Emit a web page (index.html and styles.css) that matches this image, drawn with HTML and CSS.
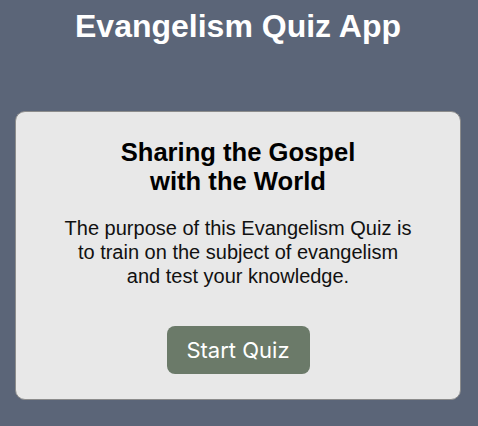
FILE: index.html
```html
<!DOCTYPE html>
<html lang="en">
<head>
<meta charset="utf-8">
<title>Evangelism Quiz App</title>
<link rel="stylesheet" href="styles.css">
</head>
<body>
<header class="app-header">
  <h1 class="app-title">Evangelism Quiz App</h1>
</header>
<main class="card">
  <h2 class="card-title">Sharing the Gospel<br>with the World</h2>
  <p class="card-text">The purpose of this Evangelism Quiz is to train on the subject of evangelism and test your knowledge.</p>
  <button class="start-btn" type="button">Start Quiz</button>
</main>
</body>
</html>
```
FILE: styles.css
```css
html, body {
  margin: 0;
  padding: 0;
}
body {
  background: #5b6578;
  font-family: "Liberation Sans", Arial, sans-serif;
  min-height: 426px;
}
.app-header {
  padding: 8px 17px 0 15px;
}
.app-title {
  margin: 0;
  font-size: 32px;
  font-weight: bold;
  color: #ffffff;
  text-align: center;
}
.card {
  margin: 66px 17px 0 15px;
  background: #e8e8e8;
  border: 1px solid #8c8c8c;
  border-radius: 10px;
  padding: 26px 20px 25px;
  display: flex;
  flex-direction: column;
  align-items: center;
  text-align: center;
}
.card-title {
  margin: 0;
  font-size: 25.6px;
  font-weight: bold;
  color: #000;
}
.card-text {
  margin: 20px 0 0;
  font-size: 20px;
  line-height: 24px;
  color: #111;
  max-width: 352px;
}
.start-btn {
  margin-top: 38px;
  width: 143px;
  height: 48px;
  border: none;
  border-radius: 8px;
  background: #6b7a69;
  color: #fff;
  font-family: Inter, "Liberation Sans", sans-serif;
  font-size: 22px;
  cursor: pointer;
}
```
